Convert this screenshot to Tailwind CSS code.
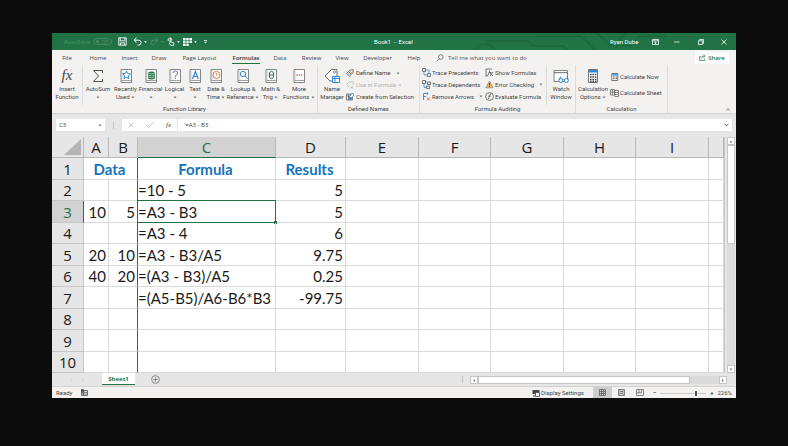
<!DOCTYPE html>
<html lang="en">
<head>
<meta charset="utf-8">
<title>Book1 - Excel</title>
<script src="https://cdn.jsdelivr.net/npm/@tailwindcss/browser@4"></script>
</head>
<body class="min-h-screen bg-[#0c0c0c] px-[52px] pt-[33px] font-['Open_Sans','Noto_Sans',sans-serif] text-[6px] leading-[8px] text-[#444]">
<svg class="hidden">
  <symbol id="caret" viewBox="0 0 4 3"><path d="M.5.5h3L2 2.4z" fill="#777"/></symbol>
  <symbol id="book" viewBox="0 0 14 16"><path d="M2 1.500h10.500v13H2z" fill="#fff" stroke="#777" stroke-width=".9"/><path d="M2.500 12.500h9.500" stroke="#888" stroke-width=".8"/><path d="M3.700 2v10" stroke="#ccc" stroke-width=".6"/></symbol>
</svg>
<div class="flex flex-col bg-[#f3f2f1]">

  <!-- Title bar -->
  <header class="relative flex h-[17px] items-center overflow-hidden bg-[#217346] text-white">
    <svg class="absolute right-[70px] top-0 h-[17px] w-[190px]" viewBox="0 0 190 17" fill="none" stroke="#1d683e" stroke-width="1.5"><path d="M10 8h42l5 5h30l8 6M0 18a9 7 0 0 1 18 0M60 3h45l14 14M120 0l16 13h18l10-10h26M150 0l-8 8"/></svg>
    <div class="flex w-[230px] items-center pl-[12px]">
      <label class="flex w-[54px] items-center gap-[3px] text-[#4a9069]">AutoSave
        <button aria-label="AutoSave off" class="flex h-[7px] w-[19px] items-center gap-[2px] rounded-full border border-[#43895f] px-[2px] text-[5px]"><span class="size-[3px] rounded-full bg-[#4a9069]"></span>Off</button></label>
      <button aria-label="Save"><svg class="size-[9px]" viewBox="0 0 9 9" fill="none" stroke="#fff" stroke-width=".9"><path d="M.8.8h7.4v7.4H.8zM2.2 1v2.8h4.6V1M2.6 8V5.8h3.8V8"/></svg></button>
      <button aria-label="Undo" class="ml-[6px] flex items-center gap-[2px]"><svg class="size-[9px]" viewBox="0 0 9 9" fill="none" stroke="#fff"><path d="M3.5.8 1 3.2l2.5 2.4M1 3.2h4.6a2.4 2.4 0 0 1 0 4.9H4.5"/></svg><svg class="h-[2px] w-[3px]" viewBox="0 0 4 3"><path d="M0 0h4L2 3z" fill="#fff"/></svg></button>
      <button aria-label="Redo" class="ml-[3px] flex items-center gap-[2px] opacity-20"><svg class="size-[9px]" viewBox="0 0 9 9" fill="none" stroke="#fff"><path d="M5.5.8 8 3.2 5.5 5.6M8 3.2H3.4a2.4 2.4 0 0 0 0 4.9h1.1"/></svg><svg class="h-[2px] w-[3px]" viewBox="0 0 4 3"><path d="M0 0h4L2 3z" fill="#fff"/></svg></button>
      <button aria-label="Touch mode" class="ml-[3px] flex items-center gap-[2px]"><svg class="h-[9px] w-[8px]" viewBox="0 0 8 9" fill="none" stroke="#fff" stroke-width=".9"><path d="M1.300 4A2 2 0 1 1 5 2.600M3 6V2.200q.5-.8 1 0V5l2.600.7q.5.4.3 1.200L6.300 8.500H4L2 6"/></svg><svg class="h-[2px] w-[3px]" viewBox="0 0 4 3"><path d="M0 0h4L2 3z" fill="#fff"/></svg></button>
      <button aria-label="Table" class="ml-[3px] flex items-center gap-[2px]"><svg class="h-[8px] w-[9px]" viewBox="0 0 9 8"><path d="M0 0h9v8H0z" fill="#fff"/><path d="M0 2.700h9M0 5.300h9M3 0v8M6 0v8" stroke="#217346" stroke-width=".7"/><path d="M6 5h3v3H6z" fill="#217346"/></svg><svg class="h-[2px] w-[3px]" viewBox="0 0 4 3"><path d="M0 0h4L2 3z" fill="#fff"/></svg></button>
      <button aria-label="Customize" class="ml-[7px]"><svg class="h-[4px] w-[3px]" viewBox="0 0 4 5"><path d="M0 0h4v1H0zM0 2h4L2 4.500z" fill="#fff"/></svg></button>
    </div>
    <h1 class="flex-1 whitespace-pre pl-[92px] font-['Roboto','Open_Sans',sans-serif]">Book1  -  Excel</h1>
    <div class="relative flex items-center pr-[9px]">
      <span class="w-[42px] font-['Roboto','Open_Sans',sans-serif]">Ryan Dube</span>
      <button aria-label="Ribbon display" class="w-[22px]"><svg class="h-[6px] w-[7px]" viewBox="0 0 7 6" fill="none" stroke="#fff" stroke-width=".8"><path d="M.5.500h6v5h-6zM.5 1.800h6M3.500 5V2.800M2.500 3.700l1-1 1 1"/></svg></button>
      <button aria-label="Minimize" class="w-[24px]"><svg class="h-[6px] w-[6px]" viewBox="0 0 6 6"><path d="M0 3h5.500" stroke="#fff" stroke-width=".7"/></svg></button>
      <button aria-label="Restore" class="w-[23px]"><svg class="size-[6px]" viewBox="0 0 6 6" fill="none" stroke="#fff" stroke-width=".8"><path d="M.5 1.700h3.800v3.800H.5zM1.700 1.500V.5h3.800v3.800h-1"/></svg></button>
      <button aria-label="Close" class="w-[6px]"><svg class="size-[6px]" viewBox="0 0 6 6" stroke="#fff" stroke-width=".8"><path d="m.5.500 5 5m0-5-5 5"/></svg></button>
    </div>
  </header>

  <!-- Ribbon tabs -->
  <nav class="flex h-[15px] items-center whitespace-nowrap pr-[7px]">
    <div class="grid grid-cols-[30px_32px_31px_28px_53px_40px_28px_35px_26px_45px_28px] text-center">
      <a href="#">File</a><a href="#">Home</a><a href="#">Insert</a><a href="#">Draw</a><a href="#">Page Layout</a>
      <a href="#" class="relative font-semibold text-[#333] after:absolute after:inset-x-[6px] after:-bottom-[2px] after:h-[1px] after:bg-[#217346]">Formulas</a>
      <a href="#">Data</a><a href="#">Review</a><a href="#">View</a><a href="#">Developer</a><a href="#">Help</a>
    </div>
    <label class="flex flex-1 items-center gap-[4px] pl-[8px]">
      <svg class="size-[8px]" viewBox="0 0 8 8" fill="none" stroke="#666" stroke-width=".8"><circle cx="4.800" cy="3" r="2.300"/><path d="M3.200 4.700.700 7.400"/></svg>
      <input aria-label="Tell me" placeholder="Tell me what you want to do" class="w-[120px] placeholder:text-[#555]">
    </label>
    <button class="flex h-[12px] w-[34px] items-center justify-center gap-[2px] bg-white font-semibold text-[#217346]"><svg class="size-[7px]" viewBox="0 0 7 7" fill="none" stroke="#217346" stroke-width=".7"><path d="M2 2.500H.7v4h5v-2M2.300 4.500q.2-2.500 3-2.500M4.300.7 6 2 4.300 3.400"/></svg>Share</button>
  </nav>

  <!-- Ribbon -->
  <section class="flex h-[49px] whitespace-nowrap border-b border-[#d2d2d2] font-['Roboto','Open_Sans',sans-serif]">
    <div class="flex w-[265px] flex-col">
      <div class="grid flex-1 grid-cols-[31px_30px_25px_25px_23px_18px_24px_30px_25px_32px] text-center [&>button]:flex [&>button]:flex-col [&>button]:items-center [&>button]:pt-[3px]">
        <button class="border-r border-[#dcdcdc]"><i class="h-[17px] font-['Liberation_Serif',serif] text-[15px] leading-[15px]">fx</i><span>Insert<br>Function</span></button>
        <button><svg class="mb-[1px] h-[16px] w-[12px]" viewBox="0 0 12 16" fill="none" stroke="#555"><path d="M10.500 5V2.500H1.500L6.500 8l-5 5.500h9V11"/></svg><span>AutoSum</span><svg class="mt-[3px] h-[3px] w-[4px]"><use href="#caret"/></svg></button>
        <button><svg class="mb-[1px] h-[16px] w-[14px]" viewBox="0 0 14 16"><use href="#book"/><path d="m7.500 3 1.200 2.600 2.800.3-2.100 1.900.6 2.800-2.500-1.400L5 10.600l.6-2.800-2.100-1.900 2.800-.3z" fill="#fff" stroke="#2b88d8"/></svg><span>Recently<br>Used <svg class="inline h-[3px] w-[4px]"><use href="#caret"/></svg></span></button>
        <button><svg class="mb-[1px] h-[16px] w-[14px]" viewBox="0 0 14 16"><use href="#book"/><path d="M4 4.500q3.500-2 7 0v6q-3.500 2-7 0z" fill="#217346"/><path d="M4 5q3.500 1.500 7 0M4 7q3.500 1.500 7 0M4 9q3.500 1.500 7 0" stroke="#fff" stroke-width=".6" fill="none"/></svg><span>Financial</span><svg class="mt-[3px] h-[3px] w-[4px]"><use href="#caret"/></svg></button>
        <button><svg class="mb-[1px] h-[16px] w-[14px]" viewBox="0 0 14 16"><use href="#book"/><path d="M5.200 5q0-2 2.200-2t2.200 2-2.100 2.700v1.200M7.500 9.800v1.200" stroke="#8661c5" fill="none"/></svg><span>Logical</span><svg class="mt-[3px] h-[3px] w-[4px]"><use href="#caret"/></svg></button>
        <button><svg class="mb-[1px] h-[16px] w-[14px]" viewBox="0 0 14 16"><use href="#book"/><path d="M4.500 11 7.400 3.500 10.300 11M5.500 8.500h3.800" stroke="#2b88d8" stroke-width="1.200" fill="none"/></svg><span>Text</span><svg class="mt-[3px] h-[3px] w-[4px]"><use href="#caret"/></svg></button>
        <button><svg class="mb-[1px] h-[16px] w-[14px]" viewBox="0 0 14 16"><use href="#book"/><circle cx="7.500" cy="7" r="3.600" fill="#fff" stroke="#e07b39"/><path d="M7.500 4.800V7h2" stroke="#e07b39" fill="none" stroke-width=".8"/></svg><span>Date &amp;<br>Time <svg class="inline h-[3px] w-[4px]"><use href="#caret"/></svg></span></button>
        <button><svg class="mb-[1px] h-[16px] w-[14px]" viewBox="0 0 14 16"><use href="#book"/><circle cx="7" cy="6" r="2.700" fill="#fff" stroke="#2b88d8"/><path d="m9 8 2.500 2.800" stroke="#2b88d8"/></svg><span>Lookup &amp;<br>Reference <svg class="inline h-[3px] w-[4px]"><use href="#caret"/></svg></span></button>
        <button><svg class="mb-[1px] h-[16px] w-[14px]" viewBox="0 0 14 16"><use href="#book"/><ellipse cx="7.500" cy="7" rx="2.300" ry="3.700" fill="#fff" stroke="#217346"/><path d="M5.500 7h4" stroke="#217346"/></svg><span>Math &amp;<br>Trig <svg class="inline h-[3px] w-[4px]"><use href="#caret"/></svg></span></button>
        <button><svg class="mb-[1px] h-[16px] w-[14px]" viewBox="0 0 14 16"><use href="#book"/><path d="M4.500 7h1.300M6.800 7h1.300M9.100 7h1.300" stroke="#d9633a" stroke-width="1.300"/></svg><span>More<br>Functions <svg class="inline h-[3px] w-[4px]"><use href="#caret"/></svg></span></button>
      </div>
      <h2 class="text-center">Function Library</h2>
    </div>
    <div class="flex w-[102px] flex-col border-l border-[#dcdcdc]">
      <div class="flex flex-1">
        <button class="flex w-[28px] flex-col items-center pt-[3px]"><svg class="mb-[1px] h-[16px] w-[16px]" viewBox="0 0 16 16" fill="none"><path d="M1 8 7.500 1.500H13V13H6z" fill="#fff" stroke="#666"/><circle cx="10.500" cy="4" r="1" stroke="#666" stroke-width=".8"/><path d="M8.500 8.500h7v6h-7zM8.500 10.500h7M11 8.500v6" fill="#fff" stroke="#2b88d8"/></svg><span>Name<br>Manager</span></button>
        <div class="flex flex-col gap-[4px] pt-[4px] [&>button]:flex [&>button]:items-center [&>button]:gap-[2px]">
          <button><svg class="size-[8px]" viewBox="0 0 8 8" fill="none" stroke="#555" stroke-width=".8"><path d="M.7 4.500 4.200.9l3-.2-.2 3-3.600 3.500zM2.400 4.600l2-2M3.600 5.400l2-2"/></svg>Define Name<svg class="ml-[4px] h-[3px] w-[4px]"><use href="#caret"/></svg></button>
          <button disabled class="text-[#b0b0b0]"><svg class="size-[8px]" viewBox="0 0 8 8" fill="none" stroke="#b5b5b5" stroke-width=".8"><path d="M.7 3.500 3.200.9h4v3M.7 3.500l2.800 2.800M4.500 5.500l2.500 2M7 5.500l-2.500 2"/></svg>Use in Formula<svg class="h-[3px] w-[4px] opacity-40"><use href="#caret"/></svg></button>
          <button><svg class="size-[8px]" viewBox="0 0 8 8" fill="none"><path d="M.5 1h6v6h-6zM.5 3h6M2.500 1v6M4.500 1v6" stroke="#555" stroke-width=".7"/><path d="M3 3.500h3v3H3z" fill="#2b88d8"/><path d="M4 3 6 .5h1.500V3L5 5" fill="#fff" stroke="#2b88d8" stroke-width=".7"/></svg>Create from Selection</button>
        </div>
      </div>
      <h2 class="text-center">Defined Names</h2>
    </div>
    <div class="flex w-[156px] flex-col border-l border-[#dcdcdc]">
      <div class="flex flex-1">
        <div class="flex w-[64px] flex-col gap-[3px] pl-[2px] pt-[3px] [&>button]:flex [&>button]:items-center [&>button]:gap-[1px]">
          <button><svg class="size-[9px]" viewBox="0 0 9 9" fill="none" stroke-width=".8"><path d="M.5.500h3v3h-3zM5.500 5.500h3v3h-3z" stroke="#555"/><path d="M2 4v3h3M4 2h3v3" stroke="#2b88d8"/></svg>Trace Precedents</button>
          <button><svg class="size-[9px]" viewBox="0 0 9 9" fill="none" stroke-width=".8"><path d="M.5.500h3v3h-3zM5.500 2h3v2.500h-3zM4.500 6h3v2.500h-3z" stroke="#555"/><path d="M2 4v3.300h2M4 2h1" stroke="#2b88d8"/></svg>Trace Dependents</button>
          <button><svg class="size-[9px]" viewBox="0 0 9 9" fill="none"><path d="M1.500 8V1.500H6M1.500 4.500H4M4.700.3 6.200 1.500 4.700 2.800" stroke="#2b88d8" stroke-width=".9"/><path d="m5 5.500 2.800 2.800m0-2.800L5 8.300" stroke="#d9633a" stroke-width=".9"/></svg>Remove Arrows<svg class="ml-[4px] h-[3px] w-[4px]"><use href="#caret"/></svg></button>
        </div>
        <div class="flex w-[63px] flex-col gap-[3px] border-r border-[#dcdcdc] pl-[1px] pt-[3px] [&>button]:flex [&>button]:items-center [&>button]:gap-[1px]">
          <button><svg class="size-[9px]" viewBox="0 0 9 9" fill="none" stroke="#555" stroke-width=".8"><path d="M1 8V1h6M.5 8h2L5 2.500M4 4.500h2.500M5 8l3-4M5 5l3 3"/></svg>Show Formulas</button>
          <button><svg class="size-[9px]" viewBox="0 0 9 9"><path d="M4.500 1 8.200 7.800H.8z" fill="#f0b95a" stroke="#777" stroke-width=".6"/><path d="M4.500 3v2.500m0 .7v.9" stroke="#333" stroke-width=".9"/></svg>Error Checking<svg class="ml-[4px] h-[3px] w-[4px]"><use href="#caret"/></svg></button>
          <button><svg class="size-[9px]" viewBox="0 0 9 9" fill="none" stroke="#555" stroke-width=".8"><circle cx="4.500" cy="4.500" r="3.900"/><path d="M3 7q1.200 0 1.400-2.500T6 2M3.200 4.200h2.500"/></svg>Evaluate Formula</button>
        </div>
        <button class="flex w-[28px] flex-col items-center pt-[3px]"><svg class="mb-[1px] h-[16px] w-[16px]" viewBox="0 0 16 16" fill="none"><path d="M1 13.500V2.500h13.500v11z" fill="#fff" stroke="#666" stroke-width=".8"/><path d="M1 4.700h13.500" stroke="#666"/><circle cx="7.800" cy="12.500" r="2" fill="#fff" stroke="#2b88d8"/><circle cx="13.300" cy="12.500" r="2" fill="#fff" stroke="#2b88d8"/><path d="M9.800 12q.8-.8 1.500 0M6 11.500l2-3M15 11l-1-2.500" stroke="#2b88d8"/></svg><span>Watch<br>Window</span></button>
      </div>
      <h2 class="text-center">Formula Auditing</h2>
    </div>
    <div class="flex w-[93px] flex-col border-x border-[#dcdcdc]">
      <div class="flex flex-1">
        <button class="flex w-[34px] flex-col items-center pt-[3px]"><svg class="mb-[1px] h-[16px] w-[12px]" viewBox="0 0 12 16"><path d="M1.500 1.500h9v13h-9z" fill="#fff" stroke="#777"/><path d="M2 2h8v2.500H2z" fill="#2b88d8"/><path d="M3 6.500h6.500M3 9h6.500M3 11.500h6.500M3 13.500h6.500" stroke="#444" stroke-width="1.300" stroke-dasharray="1.600 .8"/></svg><span>Calculation<br>Options <svg class="inline h-[3px] w-[4px]"><use href="#caret"/></svg></span></button>
        <div class="flex flex-col gap-[8px] pt-[8px] [&>button]:flex [&>button]:items-center [&>button]:gap-[1px]">
          <button><svg class="h-[8px] w-[9px]" viewBox="0 0 9 8"><path d="M1.800.500h6v7h-6z" fill="#fff" stroke="#666" stroke-width=".9"/><path d="M2.500 1.200h4.600v1.400H2.500z" fill="#2b88d8"/><path d="M3 4h4M3 5.700h4" stroke="#555" stroke-dasharray="1 .5"/></svg>Calculate Now</button>
          <button><svg class="h-[8px] w-[9px]" viewBox="0 0 9 8" fill="#fff" stroke="#666" stroke-width=".8"><path d="M.5.500h4v5.500h-4zM.5 3.200h4M2.500.500V6M4.800 1.500h3.700v6H4.800zM5 3.500h3M5 5.500h3"/></svg>Calculate Sheet</button>
        </div>
      </div>
      <h2 class="text-center">Calculation</h2>
    </div>
    <div class="flex flex-1 items-end justify-end pb-[2px] pr-[6px]"><button aria-label="Collapse ribbon"><svg class="h-[3px] w-[4px]" viewBox="0 0 4 3" fill="none" stroke="#555" stroke-width=".8"><path d="M.3 2.500 2 .7l1.700 1.800"/></svg></button></div>
  </section>

  <!-- Formula bar -->
  <section class="flex h-[23px] items-center bg-[#e6e6e6] px-[4px] pb-[1px] leading-[12px]">
    <label class="flex h-[12px] w-[49px] items-center justify-between bg-white px-[3px]"><input aria-label="Name box" value="C3" class="w-[30px]"><svg class="h-[3px] w-[4px]"><use href="#caret"/></svg></label>
    <span class="mx-[8px] h-[7px] w-px bg-[#c4c4c4]"></span>
    <div class="flex h-[12px] w-[55px] items-center justify-between bg-white px-[6px]">
      <button aria-label="Cancel"><svg class="size-[6px]" viewBox="0 0 6 6" stroke="#bbb" stroke-width=".8"><path d="m.5.500 5 5m0-5-5 5"/></svg></button>
      <button aria-label="Enter"><svg class="h-[6px] w-[8px]" viewBox="0 0 8 6" fill="none" stroke="#bbb" stroke-width=".9"><path d="m.5 3.500 2 2 5-5"/></svg></button>
      <button aria-label="Insert function" class="font-['Liberation_Serif',serif] text-[7px] italic">fx</button>
    </div>
    <label class="ml-px flex h-[12px] flex-1 items-center bg-white pl-[6px] pr-[3px]"><input aria-label="Formula bar" value="'=A3 - B3" class="flex-1"><svg class="h-[4px] w-[5px]" viewBox="0 0 5 4" fill="none" stroke="#555"><path d="m.6.800 1.900 2 1.900-2"/></svg></label>
  </section>

  <!-- Sheet grid -->
  <main class="flex bg-[#e6e6e6]">
    <table class="w-full flex-1 table-fixed border-separate border-spacing-0 whitespace-nowrap bg-white text-[15px] leading-[20px] text-[#1a1a1a] [&_td]:border-b [&_td]:border-r [&_td]:border-[#dadada] [&_td]:p-0 [&_td]:pr-[2px] [&_td]:font-['Lato','Open_Sans',sans-serif] [&_th]:p-0 [&_th]:font-normal [&_tbody_th]:border-b [&_tbody_th]:border-r [&_tbody_th]:border-[#c6c6c6] [&_thead_th]:border-b [&_thead_th]:border-r [&_thead_th]:border-[#b8b8b8] [&_tbody_tr]:h-[21px] [&_tbody_tr:nth-child(odd)]:h-[22px]">
      <colgroup><col class="w-[32px]"><col class="w-[25px]"><col class="w-[29px]"><col class="w-[138px]"><col class="w-[70px]"><col class="w-[73px]"><col class="w-[72px]"><col class="w-[73px]"><col class="w-[72px]"><col class="w-[73px]"><col></colgroup>
      <thead class="bg-[#e6e6e6]"><tr class="h-[21px]">
        <th><svg class="ml-[12px] block size-[17px]" viewBox="0 0 17 17"><path d="M17 0v16H0z" fill="#b4b4b4"/></svg></th>
        <th>A</th><th>B</th><th class="border-b-[#217346]! bg-[#d2d2d2] text-[#217346]">C</th><th>D</th><th>E</th><th>F</th><th>G</th><th>H</th><th>I</th><th></th></tr></thead>
      <tbody id="rows"></tbody>
    </table>
    <div class="flex w-[12px] flex-col items-center border-l border-[#c6c6c6]">
      <button aria-label="Scroll up" class="flex h-[8px] w-[8px] items-center justify-center border border-[#c6c6c6] bg-white"><svg class="h-[3px] w-[4px] rotate-180"><use href="#caret"/></svg></button>
      <div class="w-[8px] flex-1 bg-[#dcdcdc]"><div class="h-[45%] border border-[#c6c6c6] bg-white"></div></div>
      <button aria-label="Scroll down" class="flex h-[8px] w-[8px] items-center justify-center border border-[#c6c6c6] bg-white"><svg class="h-[3px] w-[4px]"><use href="#caret"/></svg></button>
    </div>
  </main>

  <!-- Sheet tabs -->
  <section class="flex h-[13px] items-start bg-[#e6e6e6] pr-[9px]">
    <div class="flex w-[50px] justify-center gap-[10px] pt-[2px] text-[#b5b5b5]"><button aria-label="Previous sheet">‹</button><button aria-label="Next sheet">›</button></div>
    <button class="h-[12px] w-[33px] border-b border-[#217346] bg-white font-bold text-[#217346]">Sheet1</button>
    <button aria-label="New sheet" class="ml-[16px] pt-[2px]"><svg class="size-[9px]" viewBox="0 0 9 9" fill="none" stroke="#777" stroke-width=".8"><circle cx="4.500" cy="4.500" r="3.900"/><path d="M4.500 2.300v4.400M2.300 4.500h4.400"/></svg></button>
    <div class="flex-1"></div>
    <span class="mr-[7px] mt-[3px] h-[7px] w-px bg-[#c4c4c4]"></span>
    <div class="mt-[3px] flex h-[8px] w-[257px] items-stretch">
      <button aria-label="Scroll left" class="flex w-[8px] items-center justify-center border border-[#c6c6c6] bg-white"><svg class="h-[3px] w-[4px] rotate-90"><use href="#caret"/></svg></button>
      <div class="flex-1 bg-[#dadada]"><div class="h-full w-[88%] border border-[#c6c6c6] bg-white"></div></div>
      <button aria-label="Scroll right" class="flex w-[8px] items-center justify-center border border-[#c6c6c6] bg-white"><svg class="h-[3px] w-[4px] -rotate-90"><use href="#caret"/></svg></button>
    </div>
  </section>

  <!-- Status bar -->
  <footer class="flex h-[12px] items-center border-t border-[#d2d2d2] pl-[4px] pr-[4px] font-['Roboto','Open_Sans',sans-serif]">
    <span class="w-[25px]">Ready</span>
    <svg class="h-[7px] w-[7px]" viewBox="0 0 7 7" fill="none" stroke="#555" stroke-width=".8"><path d="M.5 1.500h6v5h-6zM.5 3.300h6M.5 5h6M2.500 1.500v5"/><circle cx="1.500" cy="1.500" r="1.300" fill="#444"/></svg>
    <div class="flex-1"></div>
    <button class="flex items-center gap-[1px]"><svg class="size-[8px]" viewBox="0 0 8 8"><path d="M.5 1h7v4h-7z" fill="#444"/><path d="M3.500 3.500h4v4h-4z" fill="#fff" stroke="#444" stroke-width=".8"/><path d="M1 7h2" stroke="#444"/></svg>Display Settings</button>
    <button aria-label="Normal view" class="ml-[9px] flex h-[11px] w-[19px] items-center justify-center bg-[#cfcccc]"><svg class="size-[7px]" viewBox="0 0 7 7" fill="none" stroke="#555" stroke-width=".7"><path d="M.5.500h6v6h-6zM.5 2.500h6M.5 4.500h6M2.500.500v6M4.500.500v6"/></svg></button>
    <button aria-label="Page layout view" class="flex w-[19px] justify-center"><svg class="size-[7px]" viewBox="0 0 7 7" fill="none" stroke="#555" stroke-width=".7"><path d="M.5.500h6v6h-6zM2 .5v6M5 .5v6M2 2.500h3M2 4.500h3"/></svg></button>
    <button aria-label="Page break view" class="flex w-[19px] justify-center"><svg class="h-[7px] w-[8px]" viewBox="0 0 8 7" fill="none" stroke="#555" stroke-width=".7"><path d="M.5.500h7v6h-7zM3 .5v3.300M5.500.500v3.300M.5 3.800h5"/></svg></button>
    <label class="ml-[3px] flex items-center gap-[2px] font-bold">−<span class="relative block h-[8px] w-[50px]"><input type="range" aria-label="Zoom" value="76" class="absolute inset-0 h-[8px] w-full appearance-none bg-transparent opacity-0"><span class="absolute inset-x-[2px] top-[4px] h-px bg-[#c8c8c8]"></span><span class="absolute left-[73%] top-[2px] h-[5px] w-[2px] bg-[#555]"></span></span>+</label>
    <span class="ml-[4px]">226%</span>
  </footer>
</div>
<script>
const data = {
  2: ['', '', '=10 - 5', '5'], 3: ['10', '5', '=A3 - B3', '5'], 4: ['', '', '=A3 - 4', '6'],
  5: ['20', '10', '=A3 - B3/A5', '9.75'], 6: ['40', '20', '=(A3 - B3)/A5', '0.25'],
  7: ['', '', '=(A5-B5)/A6-B6*B3', '-99.75']
};
const title = 'text-center font-bold text-[#1573bb]';
const blank = '<td></td>'.repeat(6);
let html = `<tr><th class="bg-[#e6e6e6]">1</th><td colspan="2" class="${title} border-r-[#555]!">Data</td><td class="${title}">Formula</td><td class="${title}">Results</td>${blank}</tr>`;
for (let r = 2; r <= 10; r++) {
  const [a, b, c, d] = data[r] || ['', '', '', ''];
  const on = r === 3;
  html += `<tr><th class="${on ? 'bg-[#d2d2d2] text-[#217346] border-r-[#217346]!' : 'bg-[#e6e6e6]'}">${r}</th>` +
    `<td class="text-right">${a}</td><td class="border-r-[#555]! text-right">${b}</td>` +
    `<td class="relative pl-[3px]">${c}${on ? '<span class="absolute -left-px -top-px -right-px -bottom-px border border-[#217346]"></span><span class="absolute -right-[2px] -bottom-[2px] size-[3px] bg-[#217346]"></span>' : ''}</td>` +
    `<td class="text-right">${d}</td>${blank}</tr>`;
}
document.getElementById('rows').innerHTML = html;
</script>
</body>
</html>
